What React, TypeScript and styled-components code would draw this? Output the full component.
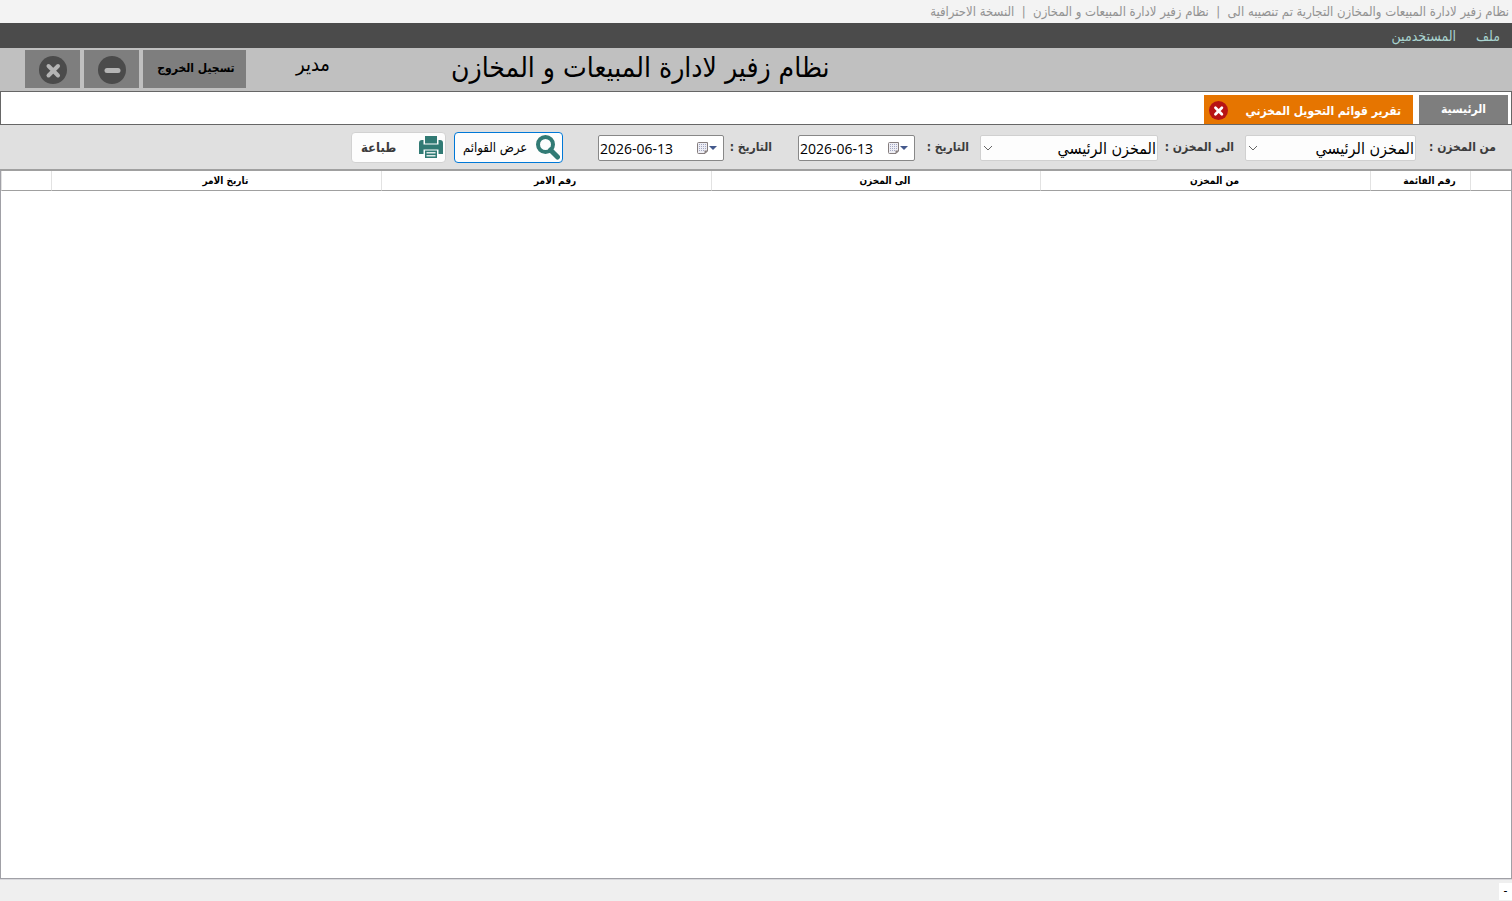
import React from "react";
import styled, { createGlobalStyle } from "styled-components";

const GlobalStyle = createGlobalStyle`
  * { box-sizing: border-box; }
  body {
    margin: 0;
    font-family: "DejaVu Sans Condensed", "DejaVu Sans", sans-serif;
    font-size: 12px;
    color: #000;
    background: #efefef;
  }
  button, input, select { font-family: inherit; margin: 0; }
`;

const Page = styled.div`
  display: flex;
  flex-direction: column;
  min-height: 100vh;
`;

const TitleBar = styled.div`
  height: 23px;
  padding: 0 3px;
  background: #f3f3f3;
  color: #929292;
  font-size: 13px;
  line-height: 24px;
  white-space: pre;
`;

const MenuBar = styled.nav`
  display: flex;
  gap: 20px;
  height: 25px;
  padding: 0 12px;
  background: #4b4b4b;
`;

const MenuLink = styled.a`
  color: #a9d3cf;
  font-size: 14px;
  line-height: 26px;
  text-decoration: none;
`;

const Banner = styled.header`
  display: flex;
  align-items: flex-start;
  height: 43px;
  padding: 2px 25px 0;
  background: #c0c0c0;
`;

const BannerSide = styled.div`
  flex: 1;
`;

const Heading = styled.h1`
  margin: 0 0 0 121px;
  font-size: 28px;
  font-weight: 400;
  line-height: 36px;
  white-space: nowrap;
`;

const UserName = styled.span`
  width: 84px;
  font-size: 20px;
  line-height: 28px;
`;

const BannerActions = styled.div`
  display: flex;
  gap: 4px;
`;

const BannerButton = styled.button<{ $width: number }>`
  display: flex;
  align-items: center;
  justify-content: center;
  width: ${(p) => p.$width}px;
  height: 38px;
  padding: 2px 0 0;
  border: 0;
  background: #7e7e7e;
  color: #000;
  font-size: 12px;
  font-weight: 700;
`;

const ButtonText = styled.span`
  padding: 0 0 4px 3px;
`;

const TabStrip = styled.div`
  display: flex;
  gap: 6px;
  height: 34px;
  padding: 3px 3px 0;
  border: 1px solid #666;
  background: #fff;
`;

const Tab = styled.button<{ $active?: boolean }>`
  display: flex;
  align-items: center;
  justify-content: ${(p) => (p.$active ? "space-between" : "center")};
  width: ${(p) => (p.$active ? 209 : 89)}px;
  height: 29px;
  padding: ${(p) => (p.$active ? "2px 12px 0 5px" : "0 0 2px")};
  border: 0;
  background: ${(p) => (p.$active ? "#e67500" : "#7e7e7e")};
  color: #fff;
  font-size: 12px;
  font-weight: 700;
  white-space: nowrap;
`;

const FilterBar = styled.form`
  display: flex;
  align-items: center;
  height: 44px;
  padding: 0 16px 0 0;
  background: #e0e0e0;
`;

const Label = styled.label<{ $width: number }>`
  width: ${(p) => p.$width}px;
  color: #3c3c3c;
  font-size: 12px;
  font-weight: 700;
  white-space: nowrap;
`;

const Field = styled.div<{ $width: number; $gap: number }>`
  position: relative;
  width: ${(p) => p.$width}px;
  margin-top: 2px;
  margin-left: ${(p) => p.$gap}px;
`;

const Select = styled.select`
  display: block;
  width: 100%;
  height: 26px;
  padding: 0 1px 0 20px;
  border: 1px solid #d0d0d0;
  border-radius: 2px;
  background: #fdfdfd;
  color: #000;
  font-size: 16px;
  appearance: none;
`;

const Chevron = styled.svg`
  position: absolute;
  left: 3px;
  top: 8px;
  pointer-events: none;
`;

const DateBox = styled.div`
  display: flex;
  align-items: center;
  direction: ltr;
  height: 26px;
  padding: 0 5px 0 1px;
  border: 1px solid #888;
  border-radius: 2px;
  background: #fff;
`;

const DateInput = styled.input`
  flex: 1;
  min-width: 0;
  padding: 0;
  border: 0;
  background: transparent;
  color: #000;
  font-family: "Open Sans", sans-serif;
  font-size: 14px;
`;

const IconButton = styled.button`
  display: flex;
  padding: 0;
  border: 0;
  background: transparent;
`;

const ToolButton = styled.button<{ $primary?: boolean }>`
  display: flex;
  align-items: center;
  justify-content: space-between;
  width: ${(p) => (p.$primary ? 109 : 95)}px;
  height: 31px;
  margin-left: 8px;
  padding: ${(p) => (p.$primary ? "0 2px 0 8px" : "0 2px 0 9px")};
  border: 1px solid ${(p) => (p.$primary ? "#0078d7" : "#d2d2d2")};
  border-radius: 4px;
  background: #fdfdfd;
  color: ${(p) => (p.$primary ? "#000" : "#3c3c3c")};
  font-size: 13px;
  font-weight: ${(p) => (p.$primary ? 400 : 700)};
  white-space: nowrap;
`;

const Grid = styled.main`
  flex: 1;
  border: 1px solid #a0a0a6;
  border-top: 2px solid #a0a0a0;
  background: #fff;
`;

const Table = styled.table`
  width: 100%;
  border-collapse: separate;
  border-spacing: 0;
  table-layout: fixed;
`;

const HeadCell = styled.th<{ $width?: number }>`
  width: ${(p) => (p.$width ? `${p.$width}px` : "auto")};
  height: 20px;
  padding: 0 0 0 18px;
  border-left: 1px solid #e2e2e2;
  border-bottom: 1px solid #a0a0a0;
  font-size: 10px;
  font-weight: 700;
  line-height: 19px;
  white-space: nowrap;
`;

const StatusBar = styled.footer`
  display: flex;
  height: 22px;
  padding-top: 3px;
  border-top: 1px solid #d8d8dc;
  background: #efefef;
`;

const StatusItem = styled.span`
  width: 13px;
  height: 17px;
  background: #fff;
  line-height: 16px;
  text-align: center;
`;

const CalendarIcon = () => (
  <svg width="22" height="14" viewBox="0 0 22 14" aria-hidden="true">
    <path d="M2.500 1.500h9v8.500l-2.500 2.500H2.500a1 1 0 0 1-1-1v-9a1 1 0 0 1 1-1z" fill="#eeeef4" stroke="#857d7d" />
    <path d="M12 9.500H8.500v3.500z" fill="#857d7d" />
    <path d="M3 3.500h8M3 5.500h8M3 7.500h8M3 9.500h5" stroke="#a3a7c4" strokeDasharray="1 1" />
    <path d="M13 5h8l-4 4z" fill="#44598c" />
  </svg>
);

const CloseCircle = ({ size, fill, mark }: { size: number; fill: string; mark: string }) => (
  <svg width={size} height={size} viewBox="0 0 28 28" aria-hidden="true">
    <circle cx="14" cy="14" r="14" fill={fill} />
    <path d="M9.500 10l9.500 9.500M19 10l-9.500 9.500" stroke={mark} strokeWidth="4" strokeLinecap="round" />
  </svg>
);

const MinusCircle = () => (
  <svg width="28" height="28" viewBox="0 0 28 28" aria-hidden="true">
    <circle cx="14" cy="14" r="14" fill="#4b4b4b" />
    <path d="M9 14.500h11" stroke="#b4b4b4" strokeWidth="5" strokeLinecap="round" />
  </svg>
);

const SearchIcon = () => (
  <svg width="24" height="25" viewBox="0 0 24 25" aria-hidden="true">
    <circle cx="9.500" cy="9.500" r="7.500" fill="none" stroke="#317a74" strokeWidth="4" />
    <path d="M14.500 15l7 7" stroke="#317a74" strokeWidth="5" strokeLinecap="round" />
  </svg>
);

const PrintIcon = () => (
  <svg width="24" height="24" viewBox="0 0 24 24" aria-hidden="true">
    <path d="M6 1h12v7.500H6z" fill="#317a74" />
    <path d="M0 8Q0 5 3 5h1.500v4.500h15V5H21q3 0 3 3v11h-4.500v-4.500h-15V19H0z" fill="#317a74" />
    <path d="M6 15.500h12V23H6z" fill="#317a74" />
    <path d="M7.500 17h9v1.500h-9zM7.500 20h9v1.500h-9z" fill="#dfe9e8" />
  </svg>
);

const WarehouseField = ({ id, width, gap }: { id: string; width: number; gap: number }) => (
  <Field $width={width} $gap={gap}>
    <Select id={id} defaultValue="main">
      <option value="main">المخزن الرئيسي</option>
    </Select>
    <Chevron width="10" height="10" viewBox="0 0 10 10" aria-hidden="true">
      <path d="M1 3l4 4 4-4" fill="none" stroke="#666" />
    </Chevron>
  </Field>
);

const DateField = ({ id, width, gap }: { id: string; width: number; gap: number }) => (
  <Field $width={width} $gap={gap}>
    <DateBox>
      <DateInput id={id} type="text" defaultValue="2026-06-13" />
      <IconButton type="button" aria-label="التاريخ">
        <CalendarIcon />
      </IconButton>
    </DateBox>
  </Field>
);

const columns: { title: string; width?: number }[] = [
  { title: "", width: 41 },
  { title: "رقم القائمة", width: 100 },
  { title: "من المخزن" },
  { title: "الى المخزن" },
  { title: "رقم الامر" },
  { title: "تاريخ الامر" },
  { title: "", width: 50 },
];

export default function App() {
  return (
    <Page dir="rtl" lang="ar">
      <GlobalStyle />
      <TitleBar>
        {"نظام زفير لادارة المبيعات والمخازن التجارية تم تنصيبه الى  |  نظام زفير لادارة المبيعات و المخازن  |  النسخة الاحترافية"}
      </TitleBar>
      <MenuBar>
        <MenuLink href="#file">ملف</MenuLink>
        <MenuLink href="#users">المستخدمين</MenuLink>
      </MenuBar>
      <Banner>
        <BannerSide />
        <Heading>نظام زفير لادارة المبيعات و المخازن</Heading>
        <UserName>مدير</UserName>
        <BannerActions>
          <BannerButton $width={103}>
            <ButtonText>تسجيل الخروج</ButtonText>
          </BannerButton>
          <BannerButton $width={55} aria-label="تصغير">
            <MinusCircle />
          </BannerButton>
          <BannerButton $width={55} aria-label="اغلاق">
            <CloseCircle size={28} fill="#4b4b4b" mark="#b4b4b4" />
          </BannerButton>
        </BannerActions>
      </Banner>
      <TabStrip>
        <Tab>الرئيسية</Tab>
        <Tab $active>
          تقرير قوائم التحويل المخزني
          <CloseCircle size={19} fill="#b81414" mark="#fff" />
        </Tab>
      </TabStrip>
      <FilterBar>
        <Label htmlFor="from-store" $width={80}>من المخزن :</Label>
        <WarehouseField id="from-store" width={171} gap={11} />
        <Label htmlFor="to-store" $width={76}>الى المخزن :</Label>
        <WarehouseField id="to-store" width={178} gap={11} />
        <Label htmlFor="from-date" $width={54}>التاريخ :</Label>
        <DateField id="from-date" width={117} gap={26} />
        <Label htmlFor="to-date" $width={48}>التاريخ :</Label>
        <DateField id="to-date" width={126} gap={35} />
        <ToolButton type="button" $primary>
          <SearchIcon />
          عرض القوائم
        </ToolButton>
        <ToolButton type="button">
          <PrintIcon />
          طباعة
        </ToolButton>
      </FilterBar>
      <Grid>
        <Table>
          <thead>
            <tr>
              {columns.map((column, index) => (
                <HeadCell key={index} $width={column.width}>
                  {column.title}
                </HeadCell>
              ))}
            </tr>
          </thead>
        </Table>
      </Grid>
      <StatusBar>
        <StatusItem>-</StatusItem>
      </StatusBar>
    </Page>
  );
}
